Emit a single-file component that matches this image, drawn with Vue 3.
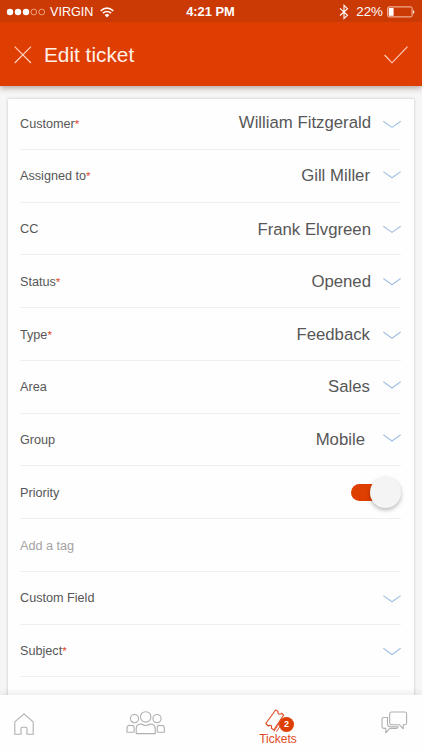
<script setup>
const rows = [
  { label: 'Customer', required: true, value: 'William Fitzgerald', gap: 12, vy: -0.6, cy: 0.4 },
  { label: 'Assigned to', required: true, value: 'Gill Miller', gap: 13, vy: 0, cy: -1.2 },
  { label: 'CC', value: 'Frank Elvgreen', gap: 12, vy: 1, cy: 0.4 },
  { label: 'Status', required: true, value: 'Opened', gap: 12, vy: 0, cy: -0.3 },
  { label: 'Type', required: true, value: 'Feedback', gap: 13, vy: 0, cy: 0.2 },
  { label: 'Area', value: 'Sales', gap: 13, vy: 0, cy: -2 },
  { label: 'Group', value: 'Mobile', gap: 18, vy: 0, cy: -2 },
  { label: 'Priority', toggle: true },
  { label: 'Add a tag', muted: true },
  { label: 'Custom Field', select: true, cy: 0.8 },
  { label: 'Subject', required: true, select: true, cy: 0.5 },
]
</script>

<template>
  <div class="screen">
    <div class="status">
      <div class="left">
        <svg class="dots" width="40" height="10" viewBox="0 0 40 10">
          <g fill="#fff"><circle cx="4" cy="5" r="3.2" /><circle cx="12" cy="5" r="3.2" /><circle cx="20" cy="5" r="3.2" /></g>
          <g fill="none" stroke="#f5b9a0" stroke-width=".8"><circle cx="27.8" cy="5" r="2.9" /><circle cx="35.8" cy="5" r="2.9" /></g>
        </svg>
        <span class="carrier">VIRGIN</span>
        <svg class="wifi" width="14" height="11" viewBox="0 0 14 11" fill="none" stroke="#fff" stroke-width="1.6">
          <path d="M.7 3.8Q7-1.4 13.3 3.8" /><path d="M2.9 6.2Q7 2.8 11.1 6.2" />
          <path d="M4.6 8Q7 6 9.4 8L7 10.5Z" fill="#fff" stroke="none" />
        </svg>
      </div>
      <span class="time">4:21 PM</span>
      <div class="right">
        <svg width="10" height="16" viewBox="0 0 10 16" fill="none" stroke="#fff" stroke-width="1.1">
          <path d="M1 4.4L8.5 11.3L5 14.5V1.3L8.5 4.7L1 11.5" />
        </svg>
        <span class="percent">22%</span>
        <svg class="battery" width="28" height="12" viewBox="0 0 28 12">
          <rect x=".7" y=".9" width="24.4" height="10" rx="1.3" fill="none" stroke="#f9c7b2" />
          <rect x="1.8" y="2" width="4.8" height="7.8" fill="#fff" />
          <path d="M26 4V8Q27.4 7.5 27.4 6T26 4" fill="#f9d7c8" />
        </svg>
      </div>
    </div>
    <header class="bar">
      <svg width="18" height="18" viewBox="0 0 18 18" fill="none" stroke="#ffd5c4" stroke-width="1.1"><path d="M.7.7L17 17M17 .7L.7 17" /></svg>
      <h1>Edit ticket</h1>
      <svg class="check" width="24" height="18" viewBox="0 0 24 18" fill="none" stroke="#ffd5c4" stroke-width="1.1"><path d="M.6 9L8 16.8L23.5.6" /></svg>
    </header>
    <main>
      <div class="card">
        <div v-for="row in rows" :key="row.label" class="row">
          <span class="label" :class="{ muted: row.muted }">{{ row.label }}<i v-if="row.required">*</i></span>
          <span v-if="row.value" class="value" :style="{ marginRight: row.gap + 'px', transform: `translateY(${row.vy}px)` }">{{ row.value }}</span>
          <svg v-if="row.value || row.select" class="chevron" :style="{ transform: `translateY(${row.cy}px)` }" width="18" height="8" viewBox="0 0 18 8" fill="none" stroke="#a2bfe3" stroke-width="1.1"><path d="M.3.8L9 7L17.7.8" /></svg>
          <span v-if="row.toggle" class="toggle"><span class="knob" /></span>
        </div>
      </div>
    </main>
    <nav>
      <svg class="home" width="20" height="22" viewBox="0 0 20 22" fill="none" stroke="#b0b0b0" stroke-width="1.1" stroke-linejoin="round">
        <path d="M.8 8.8L10 .8L19.2 8.8V21.2H13V15.2Q13 14.2 12 14.2H8Q7 14.2 7 15.2V21.2H.8Z" />
      </svg>
      <svg class="people" width="40" height="24" viewBox="0 0 40 24" fill="none" stroke="#b0b0b0" stroke-width="1.1" stroke-linejoin="round">
        <circle cx="19.7" cy="5.9" r="5.2" /><circle cx="8.5" cy="7.6" r="4.1" /><circle cx="31" cy="7.6" r="4.1" />
        <path d="M10.2 22.6V17.5Q10.2 13 15.4 13Q19.7 16 24 13Q29.2 13 29.2 17.5V22.6Z" />
        <path d="M8.1 21.2H1V17.5Q1 14.2 3.4 14.2Q4.9 15 6.4 14.2Q8.1 14.4 8.1 17V21.2" />
        <path d="M31.2 21.2H38.4V17.5Q38.4 14.2 36 14.2Q34.5 15 33 14.2Q31.2 14.4 31.2 17V21.2" />
      </svg>
      <div class="tickets">
        <div class="ticket-icon">
          <svg width="20" height="24" viewBox="0 0 20 24" fill="none" stroke="#df4a20" stroke-width="1.1" stroke-linejoin="round">
            <path d="M.8 14.5L10.6 1L13 2.2Q12.4 5.6 15.2 5.2Q16.2 4.8 16.6 4.2L18.6 6L8.8 21L6.4 19.3Q7.2 16.2 5 16.4Q3.8 16.6 3.2 17L.8 14.5Z" />
            <path d="M9 22.4L14.5 14M11.4 22.8L15.5 16.4" stroke-width=".9" />
          </svg>
          <span class="badge">2</span>
        </div>
        <span class="caption">Tickets</span>
      </div>
      <svg class="chat" width="27" height="23" viewBox="0 0 27 23" fill="none" stroke="#b0b0b0" stroke-width="1.1" stroke-linejoin="round">
        <path d="M10.5 1H23.8Q25.6 1 25.6 2.8V12Q25.6 13.8 23.8 13.8H22.2V17.8L18.4 13.8H10.5Q8.7 13.8 8.7 12V2.8Q8.7 1 10.5 1Z" />
        <path d="M6.5 6.5H2.8Q1 6.5 1 8.3V15.6Q1 17.4 2.8 17.4H4.8V21.8L8.8 17.4H15.5Q17 17.4 17 15.8H9.8Q6.5 15.8 6.5 12.5Z" />
      </svg>
    </nav>
  </div>
</template>

<style>
body { margin: 0; overflow: hidden; }
</style>

<style scoped>
.screen {
  width: 422px;
  height: 750px;
  display: flex;
  flex-direction: column;
  overflow: hidden;
  background: #f6f6f6;
  color: #575757;
  font-family: "Liberation Sans", Arial, sans-serif;
}
svg { display: block; flex: none; }
.status {
  height: 22px;
  flex: none;
  display: grid;
  grid-template-columns: 1fr auto 1fr;
  align-items: center;
  box-sizing: border-box;
  padding: 2px 7px 0 6px;
  background: #cb3904;
  color: #fff;
  line-height: 16px;
  z-index: 3;
}
.left, .right { display: flex; align-items: center; }
.right { justify-content: flex-end; }
.carrier { margin-left: 4px; font-size: 12.6px; }
.wifi { margin-left: 7px; }
.time { font-size: 12.9px; font-weight: bold; }
.percent { margin: 0 4px 0 7px; font-size: 13.4px; }
.bar {
  height: 63.5px;
  flex: none;
  display: flex;
  align-items: center;
  box-sizing: border-box;
  padding: 2px 14px 0;
  background: #df3e02;
  box-shadow: 0 2px 6px rgba(80, 40, 30, .4);
  z-index: 2;
}
h1 {
  margin: 0 0 0 12px;
  color: #fff0e9;
  font-size: 20.8px;
  font-weight: normal;
  line-height: 24px;
}
.check { margin-left: auto; }
main { flex: 1; min-height: 0; padding: 13px 8px 0; overflow: hidden; }
.card {
  height: 620px;
  padding: 0 13px 0 12px;
  background: #fefefe;
  box-shadow: 0 0 3px rgba(0, 0, 0, .2);
}
.row {
  height: 52.75px;
  box-sizing: border-box;
  display: flex;
  align-items: center;
  padding-top: 1px;
  border-bottom: 1px solid #efefef;
}
.row:first-child { height: 51.4px; padding-top: 0; }
.label { flex: 1; font-size: 12.65px; line-height: 16px; }
.label i { color: #e0482a; font-style: normal; font-size: 11.5px; line-height: 10px; }
.muted { color: #a3a3a3; }
.value { font-size: 16.75px; line-height: 20px; white-space: nowrap; }
.toggle {
  width: 50px;
  height: 17px;
  display: flex;
  align-items: center;
  justify-content: flex-end;
  border-radius: 9px;
  background: linear-gradient(90deg, #df3e02 70%, transparent 70%);
}
.knob {
  width: 31px;
  height: 31px;
  flex: none;
  border-radius: 50%;
  background: #f4f4f4;
  box-shadow: 0 2px 4px rgba(0, 0, 0, .28);
}
nav {
  height: 55.5px;
  flex: none;
  display: flex;
  align-items: flex-start;
  box-sizing: border-box;
  padding: 16px 14px 0 14px;
  background: #fefefe;
  box-shadow: 0 -1px 8px rgba(0, 0, 0, .1);
  z-index: 2;
}
.home { margin-top: 2px; }
.people { margin-left: 92px; }
.tickets {
  width: 38px;
  margin: -2px 0 0 93px;
  display: flex;
  flex-direction: column;
  align-items: center;
}
.ticket-icon { position: relative; width: 26px; height: 24px; }
.badge {
  position: absolute;
  top: 8px;
  left: 14px;
  width: 15px;
  height: 15px;
  border-radius: 50%;
  background: #df3e02;
  color: #fff;
  font-size: 9px;
  font-weight: bold;
  line-height: 15px;
  text-align: center;
}
.caption { margin-top: -1px; color: #df4a20; font-size: 12px; line-height: 14px; }
.chat { margin-left: auto; }
</style>
